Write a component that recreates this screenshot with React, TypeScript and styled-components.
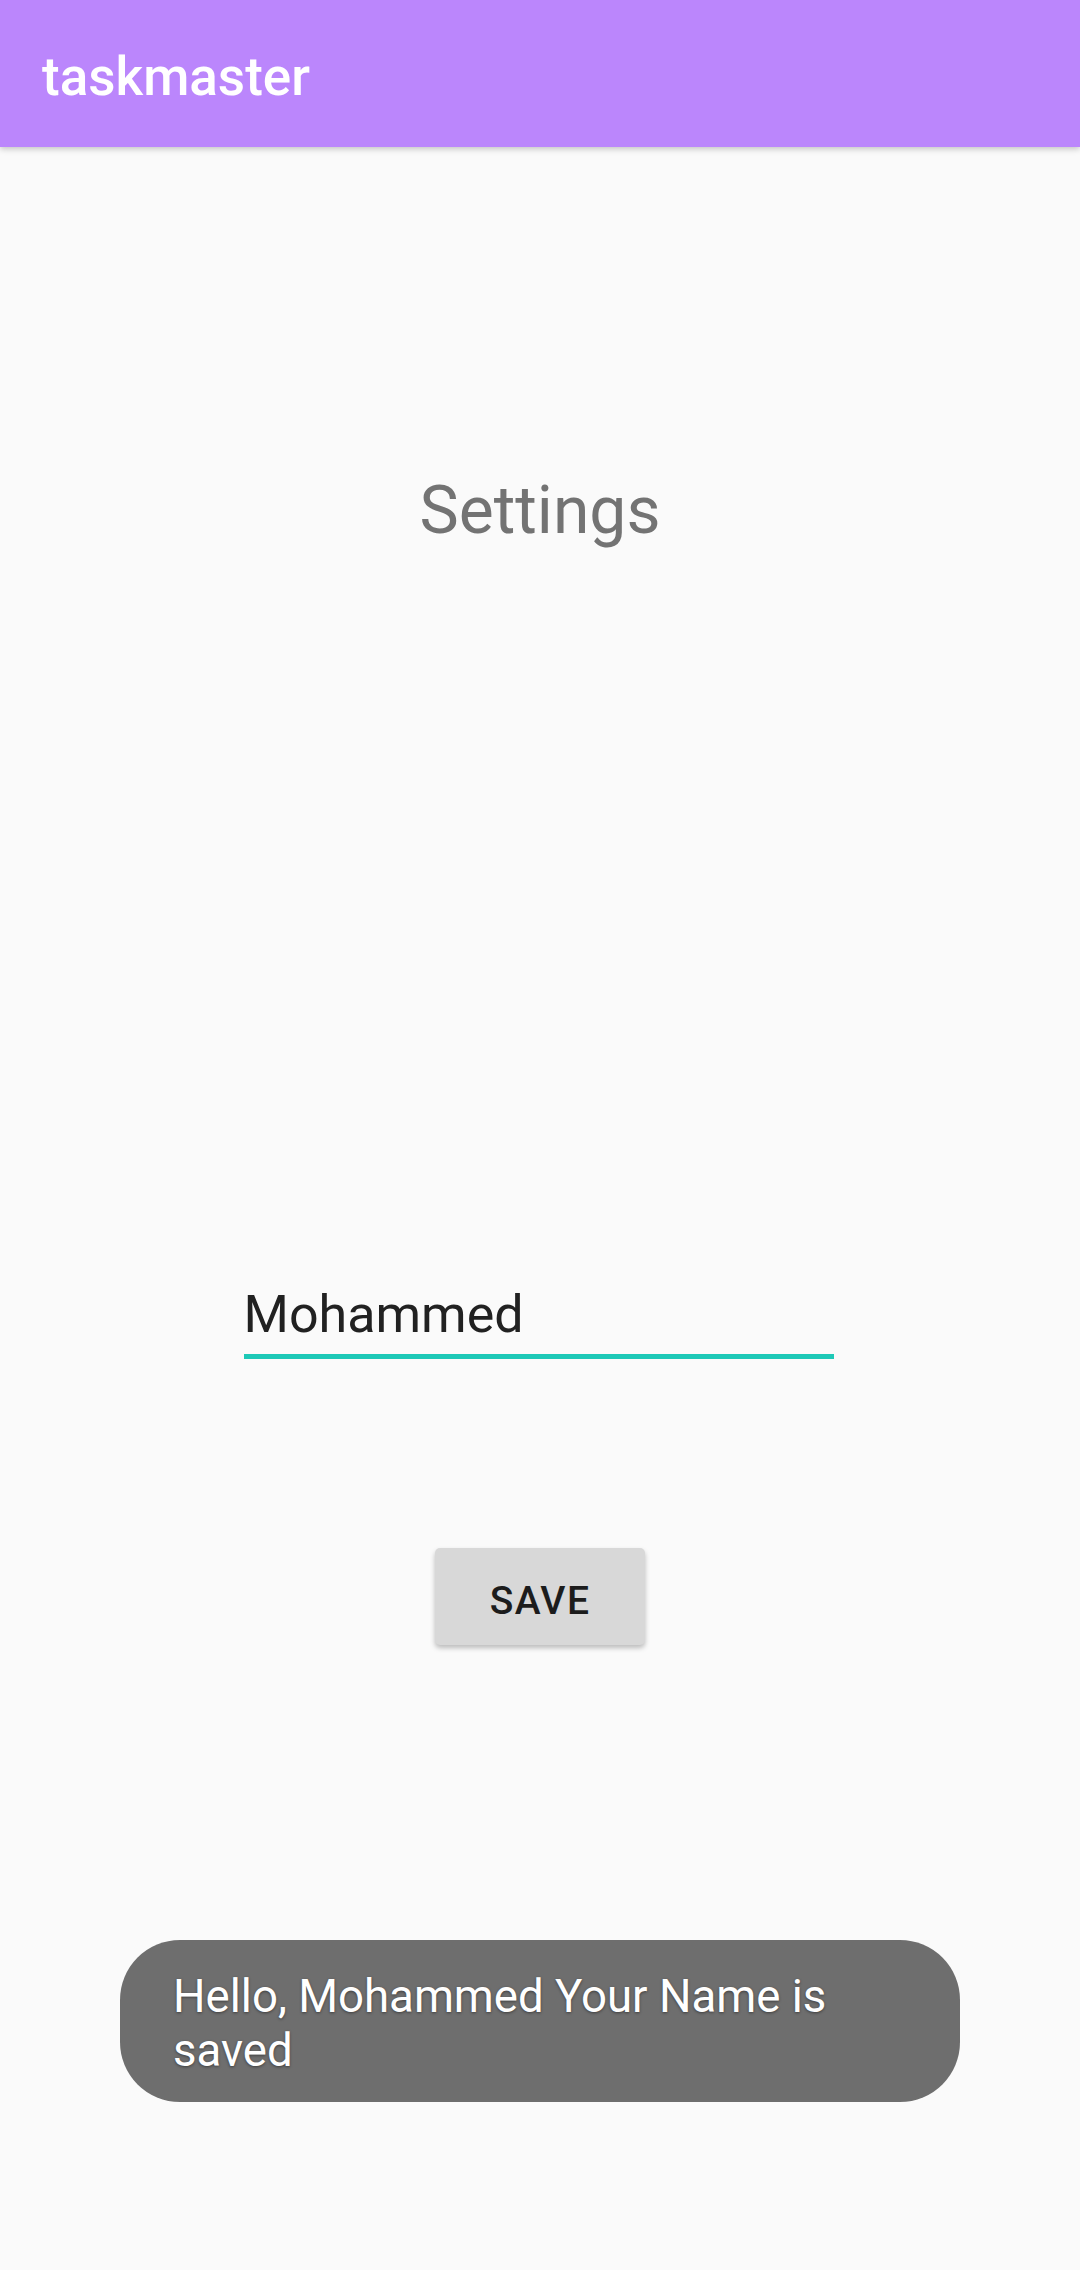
import React from 'react';
import styled, { createGlobalStyle } from 'styled-components';

const GlobalStyle = createGlobalStyle`
	html, body {
		margin: 0;
		padding: 0;
		background: #fafafa;
	}
	body {
		font-family: Roboto, "Noto Sans", "Liberation Sans", sans-serif;
	}
`;

export default function App() {
	return (
		<Screen>
			<GlobalStyle />
			<AppBar>
				<AppTitle>taskmaster</AppTitle>
			</AppBar>
			<Content>
				<Heading>Settings</Heading>
				<NameField defaultValue="Mohammed" />
				<SaveButton type="button">Save</SaveButton>
			</Content>
			<Toast>Hello, Mohammed Your Name is saved</Toast>
		</Screen>
	);
}

const Screen = styled.div`
	position: relative;
	min-height: 2270px;
	display: flex;
	flex-direction: column;
	background: #fafafa;
`;

const AppBar = styled.header`
	height: 147px;
	box-sizing: border-box;
	padding: 46px 0 0 42px;
	background: #bb86fc;
	box-shadow: 0 2px 6px rgba(0, 0, 0, 0.22);
	position: relative;
	z-index: 1;
`;

const AppTitle = styled.h1`
	margin: 0;
	font-size: 53px;
	line-height: 62px;
	font-weight: 500;
	color: #ffffff;
`;

const Content = styled.main`
	display: flex;
	flex-direction: column;
	align-items: center;
	padding-top: 325px;
`;

const Heading = styled.h2`
	margin: 0;
	font-size: 66px;
	line-height: 77px;
	font-weight: 400;
	color: #737373;
`;

const NameField = styled.input`
	margin: 734px 0 0 -3px;
	width: 590px;
	height: 76px;
	box-sizing: border-box;
	padding: 0 0 9px 0;
	border: none;
	border-bottom: 5px solid #1ec9b7;
	background: transparent;
	font-family: Roboto, sans-serif;
	font-size: 52px;
	line-height: 62px;
	color: #212121;
	outline: none;
`;

const SaveButton = styled.button`
	margin-top: 189px;
	width: 210px;
	height: 97px;
	box-sizing: border-box;
	padding: 8px 0 0 0;
	border: none;
	border-radius: 5px;
	background: #d8d8d8;
	box-shadow: 0 3px 5px rgba(0, 0, 0, 0.25);
	font-family: Roboto, sans-serif;
	font-size: 39px;
	font-weight: 500;
	letter-spacing: 1.4px;
	text-transform: uppercase;
	color: #1c1c1c;
`;

const Toast = styled.div`
	position: absolute;
	left: 120px;
	right: 120px;
	bottom: 168px;
	height: 162px;
	box-sizing: border-box;
	padding: 30px 50px 0 53px;
	border-radius: 60px;
	background: #6e6e6e;
	font-size: 45.6px;
	line-height: 54px;
	color: #ffffff;
	text-shadow: 0 1px 3px rgba(0, 0, 0, 0.45);
`;
